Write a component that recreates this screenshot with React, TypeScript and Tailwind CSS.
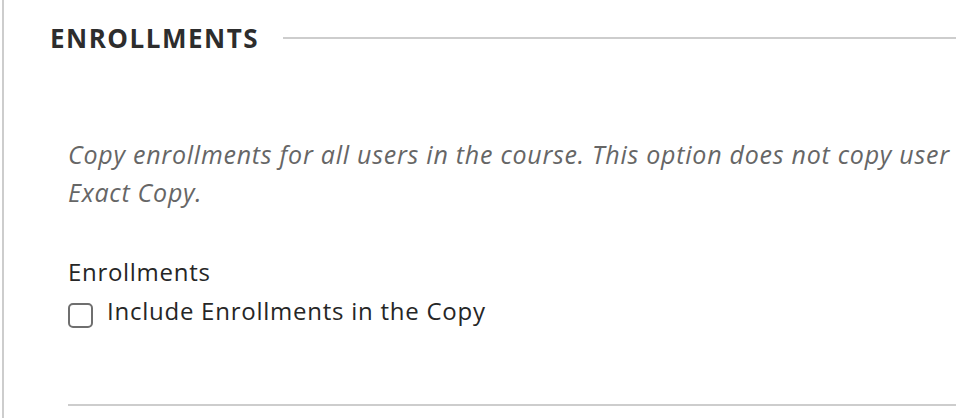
import React from 'react';

const App: React.FC = () => {
    return (
        <div className="h-[418px] w-full overflow-hidden bg-white font-['Open_Sans',sans-serif]">
            <div className="ml-[2px] h-full border-l-2 border-[#cdcdcd] pl-[46px]">
                {/* Section heading */}
                <div className="flex items-center pt-5">
                    <h2 className="whitespace-nowrap text-[26px] font-bold leading-[36px] tracking-[1.5px] text-[#2d2d2d]">
                        ENROLLMENTS
                    </h2>
                    <div className="ml-6 h-[2px] flex-1 bg-[#cdcdcd]" />
                </div>

                <div className="pl-[18px]">
                    <p className="mt-[79px] whitespace-nowrap text-[25px] italic leading-[38px] tracking-[0.75px] text-[#666666]">
                        Copy enrollments for all users in the course. This option does not copy user
                        <br />
                        Exact Copy.
                    </p>

                    <p className="mt-[46px] text-[24px] leading-[30px] tracking-[0.7px] text-[#262626]">Enrollments</p>
                    <label className="mt-[9px] flex items-start">
                        <span className="mt-[7px] h-[25px] w-[25px] shrink-0 rounded-[5px] border-2 border-[#6f6f6f] bg-white" />
                        <span className="ml-[14px] whitespace-nowrap text-[24px] leading-[30px] tracking-[0.75px] text-[#262626]">
                            Include Enrollments in the Copy
                        </span>
                    </label>

                    <div className="mt-[76px] h-[2px] bg-[#cdcdcd]" />
                </div>
            </div>
        </div>
    );
};

export default App;
